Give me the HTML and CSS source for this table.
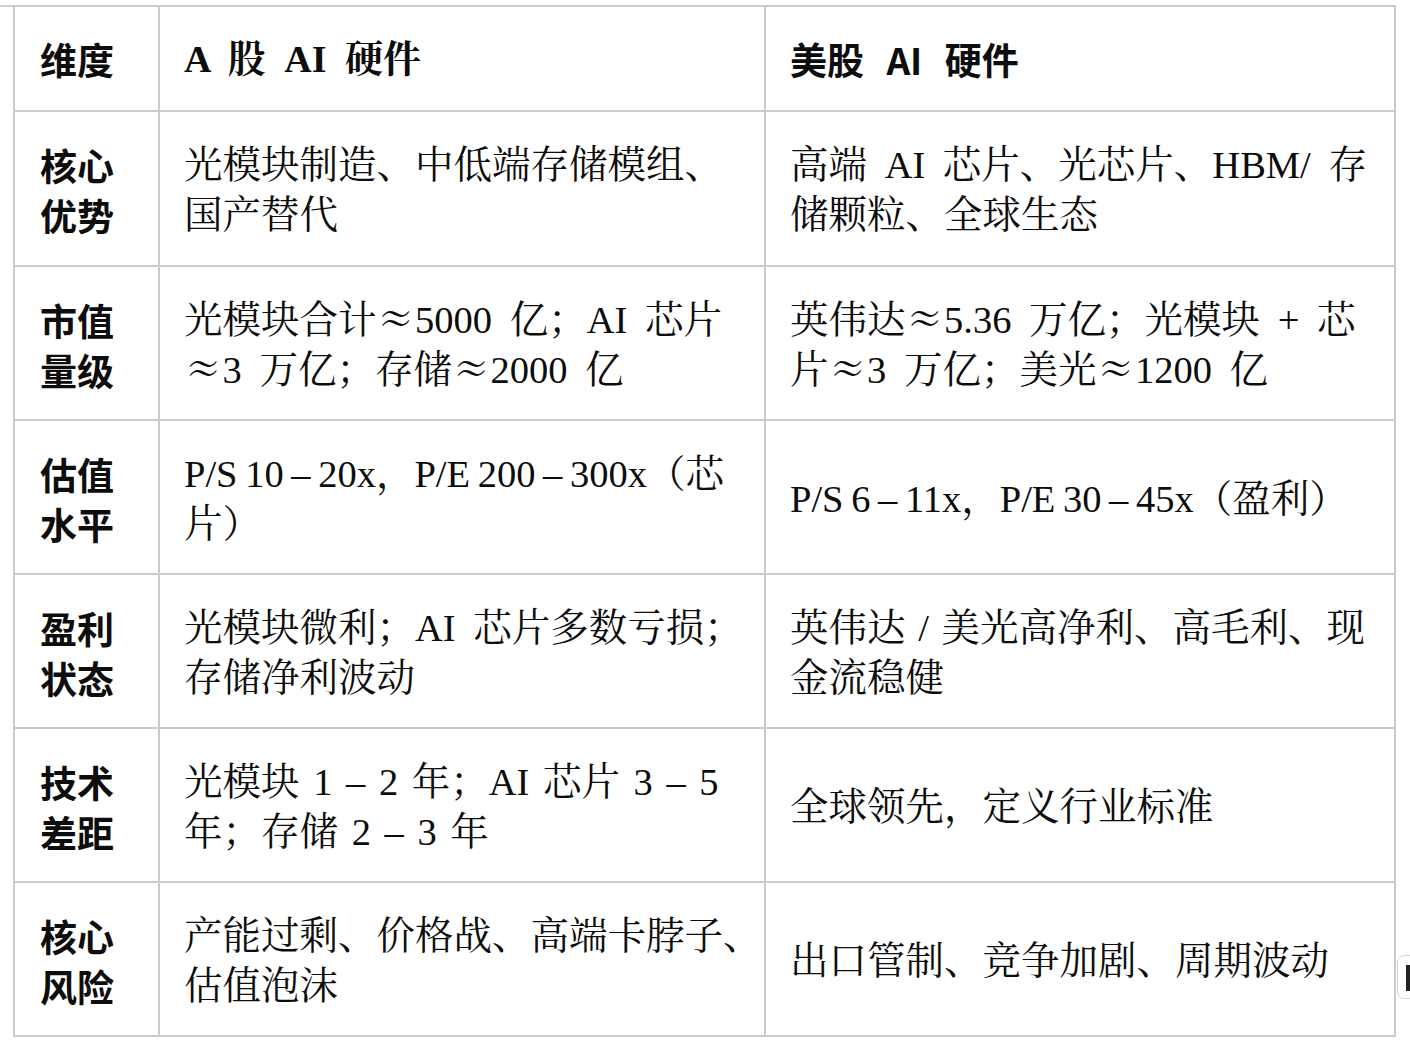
FILE: index.html
```html
<!DOCTYPE html>
<html lang="zh-CN">
<head>
<meta charset="utf-8">
<title>A股 vs 美股 AI 硬件</title>
<link rel="stylesheet" href="styles.css">
</head>
<body>
<div class="page">
  <div class="rule"></div>
  <table class="grid">
    <colgroup>
      <col class="c-dim">
      <col class="c-a">
      <col class="c-us">
    </colgroup>
    <thead>
      <tr>
        <th class="dim">维度</th>
        <th class="head head-a">A 股 AI 硬件</th>
        <th class="head head-us">美股 AI 硬件</th>
      </tr>
    </thead>
    <tbody>
      <tr class="first">
        <th class="dim">核心<br>优势</th>
        <td>光模块制造、中低端存储模组、<br>国产替代</td>
        <td>高端 AI 芯片、光芯片、HBM/ 存<br>储颗粒、全球生态</td>
      </tr>
      <tr>
        <th class="dim">市值<br>量级</th>
        <td>光模块合计<span class="cj">≈</span>5000 亿；AI 芯片<br><span class="cj">≈</span>3 万亿；存储<span class="cj">≈</span>2000 亿</td>
        <td>英伟达<span class="cj">≈</span>5.36 万亿；光模块 + 芯<br>片<span class="cj">≈</span>3 万亿；美光<span class="cj">≈</span>1200 亿</td>
      </tr>
      <tr class="tight">
        <th class="dim">估值<br>水平</th>
        <td>P/S 10 – 20x，P/E 200 – 300x（芯<br>片）</td>
        <td>P/S 6 – 11x，P/E 30 – 45x（盈利）</td>
      </tr>
      <tr>
        <th class="dim">盈利<br>状态</th>
        <td>光模块微利；AI 芯片多数亏损；<br>存储净利波动</td>
        <td class="narrow">英伟达 / 美光高净利、高毛利、现<br>金流稳健</td>
      </tr>
      <tr class="mid">
        <th class="dim">技术<br>差距</th>
        <td>光模块 1 – 2 年；AI 芯片 3 – 5<br>年；存储 2 – 3 年</td>
        <td>全球领先，定义行业标准</td>
      </tr>
      <tr>
        <th class="dim">核心<br>风险</th>
        <td>产能过剩、价格战、高端卡脖子、<br>估值泡沫</td>
        <td>出口管制、竞争加剧、周期波动</td>
      </tr>
    </tbody>
  </table>
  <div class="badge"><span class="badge-mark"></span></div>
</div>
</body>
</html>
```
FILE: styles.css
```css
html, body {
  margin: 0;
  padding: 0;
  background: #ffffff;
}

.page {
  position: relative;
  width: 1410px;
  height: 1050px;
  overflow: hidden;
  padding-top: 5px;
  box-sizing: border-box;
}

.rule {
  width: 1368px;
  height: 2px;
  background: #cfcfcf;
}

.grid {
  margin-left: 13px;
  margin-top: -2px;
  width: 1383px;
  table-layout: fixed;
  border-collapse: collapse;
  color: #0d0d0d;
  font-family: "Liberation Serif", "Noto Serif CJK SC", "Source Han Serif SC", "Noto Sans CJK SC", serif;
  font-size: 38.5px;
  line-height: 50px;
}

.c-dim { width: 145px; }
.c-a { width: 606px; }
.c-us { width: 630px; }

.grid th,
.grid td {
  border: 2px solid #cbcbcb;
  padding: 28px 10px 24px 24px;
  text-align: left;
  vertical-align: middle;
  white-space: nowrap;
  font-weight: 400;
}

.grid thead th {
  padding-top: 27px;
  padding-bottom: 26px;
}

.grid tr.first th,
.grid tr.first td {
  padding-bottom: 25px;
}

.grid th.dim {
  padding-left: 25px;
  font-family: "Noto Sans CJK SC", sans-serif;
  font-weight: 700;
  font-size: 37px;
}

.grid th.head-a {
  font-family: "Liberation Serif", "Noto Serif CJK SC", serif;
  font-weight: 700;
  font-size: 38px;
  word-spacing: 9px;
}

.grid th.head-us {
  font-family: "Noto Sans CJK SC", sans-serif;
  font-weight: 700;
  font-size: 37px;
  word-spacing: 14px;
}

.grid td {
  word-spacing: 8px;
}

.grid tr.tight td {
  word-spacing: -2px;
}

.grid tr.mid td {
  word-spacing: 4px;
}

.grid td.narrow {
  word-spacing: 3px;
}

.cj {
  font-family: "Noto Serif CJK SC", "Noto Sans CJK SC", serif;
  line-height: 0;
}

.badge {
  position: absolute;
  left: 1397px;
  top: 955px;
  width: 30px;
  height: 44px;
  border: 1px solid #d6d6d6;
  border-radius: 7px;
  background: #ffffff;
  box-sizing: border-box;
}

.badge-mark {
  position: absolute;
  left: 8px;
  top: 9px;
  width: 6px;
  height: 26px;
  background: #222222;
}
```
